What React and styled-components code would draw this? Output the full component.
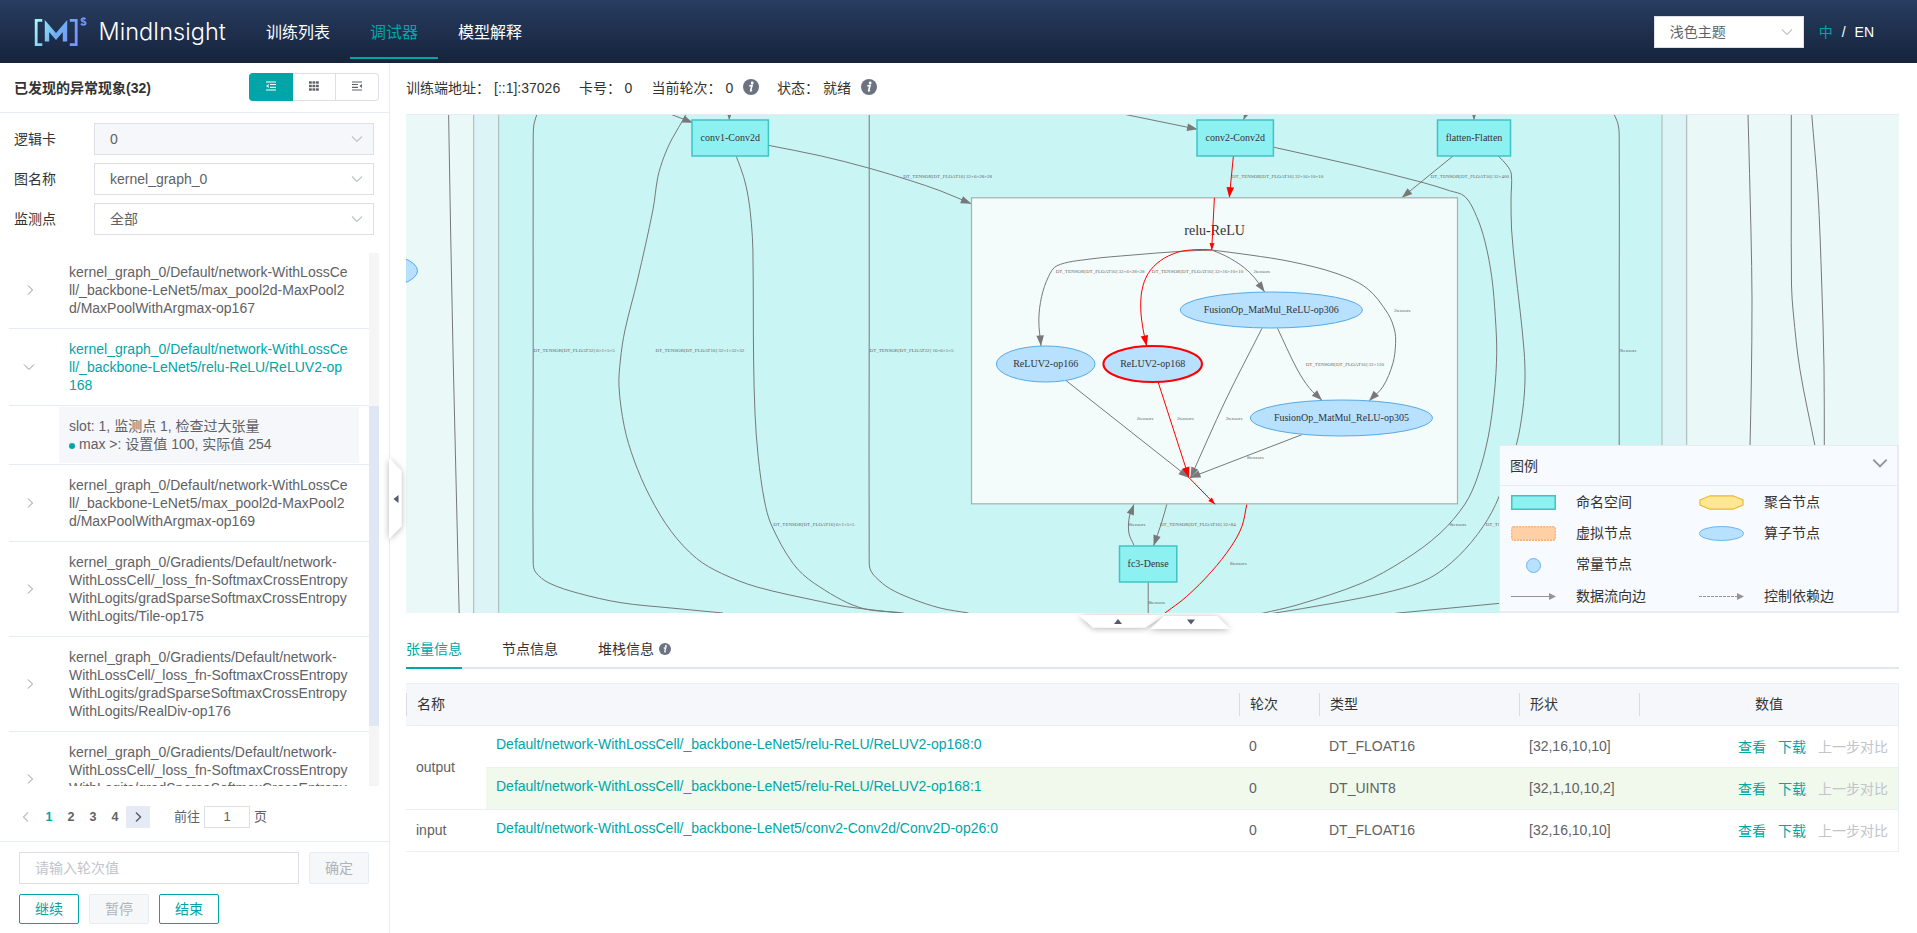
import React from "react";
import styled, { createGlobalStyle, css } from "styled-components";

const TEAL = "#00a5a7";
const SANS = `"Liberation Sans", "Noto Sans CJK SC", sans-serif`;

const GlobalStyle = createGlobalStyle`
  * { box-sizing: border-box; }
  html, body { margin: 0; padding: 0; }
  body {
    width: 1917px;
    height: 933px;
    overflow: hidden;
    background: #fff;
    color: #333;
    font: 14px/18px ${SANS};
  }
`;

/* ---------- page frame ---------- */

const Page = styled.div`
  display: flex;
  flex-direction: column;
  width: 1917px;
  height: 933px;
`;

const Header = styled.header`
  display: flex;
  align-items: center;
  flex: none;
  height: 63px;
  padding: 0 43px 0 34px;
  background: linear-gradient(180deg, #283d60, #16233b);
  color: #fff;
`;

const Brand = styled.div`
  display: flex;
  align-items: center;
  width: 212px;
  font: 300 23.5px/30px Inter, sans-serif;
`;

const BrandName = styled.span`
  margin-left: 10.5px;
  white-space: nowrap;
  letter-spacing: 0;
`;

const Nav = styled.nav`
  display: flex;
  height: 59px;
  margin-bottom: 4px;
`;

const NavItem = styled.a`
  display: flex;
  align-items: center;
  height: 59px;
  padding: 8px 20px 0;
  font-size: 16px;
  color: ${(p) => (p.$active ? TEAL : "#fff")};
  border-bottom: 2px solid ${(p) => (p.$active ? TEAL : "transparent")};
`;

const HeaderTools = styled.div`
  display: flex;
  align-items: center;
  margin-left: auto;
`;

const Lang = styled.div`
  display: flex;
  gap: 9px;
  margin-left: 15px;
  b { font-weight: 400; color: ${TEAL}; }
`;

const Body = styled.div`
  display: flex;
  flex: 1;
  min-height: 0;
`;

/* ---------- form parts ---------- */

const SelectBox = styled.div`
  display: flex;
  align-items: center;
  justify-content: space-between;
  width: ${(p) => p.$width}px;
  height: 32px;
  padding: 0 10px 0 15px;
  border: 1px solid #dcdfe6;
  background: ${(p) => (p.$disabled ? "#f5f7fa" : "#fff")};
  color: #606266;
`;

const Button = styled.button`
  width: 60px;
  height: ${(p) => p.$height || 30}px;
  padding: 0;
  border-radius: 2px;
  border: 1px solid ${TEAL};
  background: #fff;
  color: ${TEAL};
  font: 14px/18px ${SANS};
  ${(p) =>
    p.$disabled &&
    css`
      border-color: #e6ebf5;
      background: #f5f7f8;
      color: #b0b3b8;
    `}
`;

/* ---------- sidebar ---------- */

const Sidebar = styled.aside`
  position: relative;
  display: flex;
  flex-direction: column;
  flex: none;
  width: 390px;
  border-right: 1px solid #e6ebf5;
`;

const SideHead = styled.div`
  display: flex;
  align-items: center;
  justify-content: space-between;
  height: 50px;
  padding: 0 10px 0 14px;
  border-bottom: 1px solid #e6ebf5;
  font-weight: 700;
`;

const Segmented = styled.div`
  display: flex;
  height: 28px;
  margin-bottom: 1px;
`;

const Segment = styled.div`
  display: flex;
  align-items: center;
  justify-content: center;
  width: 43px;
  padding-bottom: 2px;
  border: 1px solid #dcdfe6;
  border-left-width: 0;
  color: #5f6266;
  &:last-child { border-radius: 0 4px 4px 0; }
  ${(p) =>
    p.$active &&
    css`
      width: 44px;
      border-color: ${TEAL};
      border-radius: 4px 0 0 4px;
      background: ${TEAL};
      color: #fff;
    `}
`;

const Filters = styled.div`
  display: grid;
  gap: 8px;
  padding: 10px 0 0 14px;
`;

const Filter = styled.div`
  display: flex;
  align-items: center;
  > span { width: 80px; }
`;

const ListArea = styled.div`
  display: flex;
  height: 533px;
  margin: 18px 10px 0 9px;
  overflow: hidden;
`;

const List = styled.div`
  width: 360px;
  margin-top: -1px;
`;

const ListRow = styled.div`
  display: flex;
  align-items: center;
  padding: 11px 0;
  border-bottom: 1px solid #e6ebf5;
  color: ${(p) => (p.$active ? TEAL : "#606266")};
`;

const Expander = styled.div`
  display: flex;
  flex: none;
  width: 60px;
  padding-left: ${(p) => (p.$open ? 13.5 : 15)}px;
`;

const Lines = styled.div`
  line-height: 18px;
  white-space: pre;
`;

const Detail = styled.div`
  padding: 1px 10px 1px 50px;
  border-bottom: 1px solid #e6ebf5;
`;

const DetailCard = styled.div`
  height: 56px;
  padding: 10px;
  background: #f5f7fb;
  color: #606266;
`;

const Bullet = styled.i`
  display: inline-block;
  width: 6px;
  height: 6px;
  margin-right: 4px;
  border-radius: 50%;
  background: ${TEAL};
`;

const Track = styled.div`
  width: 10px;
  padding-top: 153px;
  background: #f5f5f5;
`;

const Thumb = styled.div`
  height: 320px;
  background: #dfe6f4;
`;

const Pager = styled.div`
  display: flex;
  align-items: center;
  height: 22px;
  margin: 20px 0 13px 14px;
  color: #606266;
  font-size: 13px;
`;

const PageNo = styled.span`
  width: 22px;
  text-align: center;
  font-size: 12.5px;
  font-weight: 700;
  color: ${(p) => (p.$active ? TEAL : "#606266")};
`;

const PageArrow = styled.span`
  display: flex;
  align-items: center;
  justify-content: center;
  width: 24px;
  height: 22px;
  background: ${(p) => (p.$filled ? "#e6eaf5" : "transparent")};
`;

const JumpLabel = styled.span`
  margin-left: 24px;
`;

const PageInput = styled.span`
  width: 46px;
  height: 22px;
  margin: 0 4px;
  border: 1px solid #dcdfe6;
  text-align: center;
  line-height: 20px;
`;

const SideFoot = styled.div`
  display: grid;
  gap: 10px;
  padding: 10px 20px 0 19px;
  border-top: 1px solid #e6ebf5;
`;

const FootRow = styled.div`
  display: flex;
  gap: 10px;
`;

const StepInput = styled.div`
  width: 280px;
  height: 32px;
  padding: 0 15px;
  border: 1px solid #dcdfe6;
  line-height: 30px;
  color: #c0c4cc;
`;

const SideHandle = styled.svg`
  position: absolute;
  left: 380px;
  top: 385px;
  z-index: 2;
`;

/* ---------- main area ---------- */

const Main = styled.main`
  flex: 1;
  min-width: 0;
  padding: 0 18px 0 16px;
`;

const InfoBar = styled.div`
  display: flex;
  align-items: center;
  height: 51px;
  padding-bottom: 1px;
  white-space: pre;
`;

const Field = styled.span`
  display: flex;
  width: ${(p) => p.$width}px;
  > span:first-child { width: ${(p) => p.$label}px; }
`;

const InfoDot = styled.svg`
  flex: none;
  width: ${(p) => p.$size}px;
  height: ${(p) => p.$size}px;
  margin: ${(p) => p.$margin || 0};
`;

const GraphPanel = styled.section`
  position: relative;
  height: 499px;
  border-top: 1px solid #e6ebf5;
  > svg { display: block; }
`;

const Handles = styled.svg`
  position: absolute;
  left: 661px;
  top: 498px;
  z-index: 1;
`;

const Legend = styled.div`
  position: absolute;
  right: 0;
  bottom: 0;
  width: 400px;
  height: 168px;
  border: 1px solid #e6ebf5;
  border-right-width: 2px;
  border-bottom-width: 2px;
  background: #f7faff;
`;

const LegendHead = styled.div`
  display: flex;
  align-items: center;
  justify-content: space-between;
  height: 40px;
  padding: 1px 9.5px 0 10px;
  border-bottom: 1px solid #e6ebf5;
  color: #333;
  svg { margin-top: -6px; }
`;

const LegendGrid = styled.div`
  display: grid;
  grid-template-columns: 188px 188px;
  grid-auto-rows: 31.3px;
  padding: 1px 0 0 11px;
`;

const LegendItem = styled.div`
  display: flex;
  align-items: center;
  gap: 20px;
  &:nth-child(5) { grid-column: 1 / 3; }
  span { margin-top: -2px; }
`;

const Tabs = styled.div`
  display: flex;
  align-items: flex-start;
  gap: 40px;
  height: 56px;
  padding-top: 20px;
  border-bottom: 2px solid #e4e7f0;
`;

const Tab = styled.div`
  display: flex;
  align-items: center;
  gap: 5px;
  height: 36px;
  padding-bottom: 3px;
  border-bottom: 2px solid ${(p) => (p.$active ? TEAL : "transparent")};
  color: ${(p) => (p.$active ? TEAL : "#333")};
`;

const Table = styled.div`
  display: grid;
  grid-template-columns: 80px 753px 80px 200px 120px 259px;
  grid-template-rows: 42px 42px 42px 42px;
  margin-top: 14px;
  border: solid #ebeef5;
  border-width: 1px 1px 0 0;
`;

const HeadCell = styled.div`
  display: flex;
  align-items: center;
  grid-column: span ${(p) => p.$span || 1};
  padding-bottom: 1px;
  background: #f5f7fa;
  border-bottom: 1px solid #ebeef5;
  &::before {
    content: "";
    height: 23px;
    border-left: 1px solid #d8dce5;
    margin-right: 10px;
  }
  > span {
    flex: 1;
    padding-right: ${(p) => (p.$center ? 10 : 0)}px;
    text-align: ${(p) => (p.$center ? "center" : "left")};
  }
`;

const Cell = styled.div`
  display: flex;
  align-items: center;
  gap: 12px;
  grid-row: span ${(p) => p.$rows || 1};
  padding: 0 10px ${(p) => (p.$link ? 6 : 1)}px 10px;
  border-bottom: 1px solid #ebeef5;
  justify-content: ${(p) => (p.$end ? "flex-end" : "flex-start")};
  background: ${(p) => (p.$hl ? "#f0f9eb" : "transparent")};
  color: ${(p) => (p.$link ? TEAL : "#606266")};
`;

const Action = styled.a`
  padding-top: 1px;
  color: ${(p) => (p.$off ? "#c0c4cc" : TEAL)};
`;

/* ---------- small drawings ---------- */

const Chevron = ({ dir = "down", size = 12, width = 1.2, color = "#c0c4cc" }) => {
  const d = {
    down: "M1 3.5 6 8.5 11 3.5",
    right: "M4 1.5 8.5 6 4 10.5",
    left: "M8 1.5 3.5 6 8 10.5",
  }[dir];
  return (
    <svg width={size} height={size} viewBox="0 0 12 12">
      <path d={d} fill="none" stroke={color} strokeWidth={width} />
    </svg>
  );
};

const Info = ({ size, margin }) => (
  <InfoDot $size={size} $margin={margin} viewBox="0 0 16 16">
    <circle cx="8" cy="8" r="8" fill="#6c7280" />
    <circle cx="9.2" cy="4" r="1.4" fill="#fff" />
    <path d="M6.3 6.9 9 6.5 7.7 11.4C7.6 12 8 12 8.900 11.200" fill="none" stroke="#fff" strokeWidth="1.7" />
  </InfoDot>
);

const Logo = () => (
  <svg width="54" height="32" viewBox="34 15 54 32">
    <defs>
      <linearGradient id="lg" gradientUnits="userSpaceOnUse" x1="35" x2="77" y1="22" y2="40">
        <stop offset="0" stopColor="#a6f7f8" />
        <stop offset="0.5" stopColor="#6fb0f2" />
        <stop offset="1" stopColor="#7c92fd" />
      </linearGradient>
    </defs>
    <g fill="none" stroke="url(#lg)">
      <path d="M42.300 19.300H36.200V43.600H42.300" strokeWidth="2.8" />
      <path d="M69.800 19.300H76.200V43.600H69.800" strokeWidth="2.800" />
      <path d="M47 40.500V25L56 35.500 65 25V40.500" strokeWidth="4.400" />
    </g>
    <path d="M85.400 18.300C84 16.900 81.500 17.100 81.500 18.900 81.500 21 85.600 20 85.600 22.200 85.600 24.100 82.600 24.300 81 22.700" fill="none" stroke="#7391f8" strokeWidth="2" />
  </svg>
);

const IndentIcon = ({ flip }) => (
  <svg width="10" height="10" viewBox="0 0 10 10" fill="currentColor">
    <path d="M0 .4H10V1.6H0zM0 8.4H10V9.6H0z" />
    {flip ? (
      <path d="M0 3H6V4.1H0zM0 5.8H6V6.9H0zM10 3V7L7.4 5z" />
    ) : (
      <path d="M4 3H10V4.1H4zM4 5.8H10V6.9H4zM0 5 2.6 3V7z" />
    )}
  </svg>
);

const GridIcon = () => (
  <svg width="10" height="10" viewBox="0 0 10 10" fill="currentColor">
    {[0, 3.5, 7].map((y) =>
      [0, 3.5, 7].map((x) => <rect key={`${x}-${y}`} x={x} y={y + 0.3} width="2.8" height="2.4" />)
    )}
  </svg>
);

/* ---------- graph ---------- */

const GRAY = "#787878";
const RED = "#ff0000";

const unit = (a, b) => {
  const dx = b[0] - a[0];
  const dy = b[1] - a[1];
  const l = Math.hypot(dx, dy) || 1;
  return [dx / l, dy / l];
};

// Smooth curve through a list of points; handles are a third of each segment.
const spline = (pts) => {
  let d = `M${pts[0].join(" ")}`;
  for (let i = 0; i < pts.length - 1; i++) {
    const b = pts[i];
    const c = pts[i + 1];
    const h = Math.hypot(c[0] - b[0], c[1] - b[1]) / 3;
    const s = unit(pts[i - 1] || b, c);
    const e = unit(b, pts[i + 2] || c);
    d += `C${b[0] + s[0] * h} ${b[1] + s[1] * h} ${c[0] - e[0] * h} ${c[1] - e[1] * h} ${c[0]} ${c[1]}`;
  }
  return d;
};

const Edge = ({ pts, red, head = 0 }) => {
  const color = red ? RED : GRAY;
  const [x, y] = pts[pts.length - 1];
  const [px, py] = pts[pts.length - 2];
  const angle = (Math.atan2(y - py, x - px) * 180) / Math.PI;
  const w = head * 0.36;
  return (
    <g>
      <path d={spline(pts)} fill="none" stroke={color} strokeWidth="1" />
      {head > 0 && (
        <path d={`M0 0L${-head} ${-w}V${w}Z`} fill={color} transform={`translate(${x} ${y}) rotate(${angle})`} />
      )}
    </g>
  );
};

const EDGES = [
  { pts: [[448.6, 114], [450.6, 230], [453.2, 360], [459.2, 614]] },
  { pts: [[537, 114], [534, 124], [533.2, 136], [533.2, 350], [533.2, 562], [535.5, 572], [549, 583], [578.6, 593.3], [621, 602.7], [671, 608], [723, 613]] },
  { pts: [[686, 115], [671.4, 140], [664, 156.7], [657.9, 176.7], [652.9, 210], [637.5, 280], [625, 330], [620.4, 360], [619, 386.7], [624.3, 426.7], [634, 460], [650, 496.7], [671.4, 531.7], [696.4, 558.3], [721.4, 573.3], [757, 587], [821.4, 601.7], [846.4, 606.7], [900, 613]] },
  { pts: [[670, 114], [692.9, 122.7]], head: 10.5 },
  { pts: [[729.3, 105], [729.3, 120]], head: 10.5 },
  { pts: [[736.4, 156.7], [743.6, 176.7], [748.2, 196.7], [751.4, 223.3], [752.9, 250], [753.3, 310], [753.6, 360], [755, 413.3], [758.2, 456.7], [764.3, 500], [771.4, 525], [792.9, 563.3], [814.3, 583.3], [858.9, 607.3], [903.6, 613]] },
  { pts: [[869.2, 114], [869.2, 340], [869.2, 562], [870.5, 570], [876, 577.5], [889.3, 588.3], [910.7, 598.3], [940, 608], [968.6, 613]] },
  { pts: [[768.2, 145.3], [821.4, 156], [869.6, 168.3], [910.7, 180.7], [940, 190.7], [971.3, 203.7]], head: 10.5 },
  { pts: [[1123, 114], [1197.6, 129.3]], head: 10.5 },
  { pts: [[1250, 105], [1243.4, 120]], head: 10.5 },
  { pts: [[1474, 105], [1474, 120]], head: 10.5 },
  { pts: [[1453, 156], [1401.8, 197.7]], head: 10.5 },
  { pts: [[1498.3, 156], [1506.7, 165], [1511.3, 174], [1511, 200], [1511.6, 230], [1515, 266.7], [1520, 310], [1524, 350], [1525, 380], [1522.7, 410], [1516.3, 445], [1499, 496.7], [1483, 526.7], [1457.9, 556.7], [1429.3, 578.3], [1393.6, 590.7], [1332.9, 603.3], [1272, 613.5]] },
  { pts: [[1274, 147.3], [1353, 165], [1422, 182.3], [1449.6, 190.7], [1465, 196.6], [1476.7, 216.7], [1485, 241.7], [1491.7, 276.7], [1495.3, 316.7], [1496.7, 353.3], [1494.3, 393.3], [1488.2, 437], [1477.5, 477], [1465, 504], [1440, 533.3], [1404.3, 560], [1361.4, 583.3], [1297, 605], [1261.4, 613.5]] },
  { pts: [[1614, 114], [1618, 124], [1619.2, 136], [1619.2, 300], [1619.2, 450]] },
  { pts: [[1395.4, 613.3], [1500, 603.3]] },
  { pts: [[1748, 114], [1751, 233], [1752, 300], [1751.3, 383], [1750, 446]] },
  { pts: [[1791.3, 114], [1791.3, 200], [1791.5, 285], [1793.3, 313], [1800, 370], [1815, 446]] },
  { pts: [[1811.7, 114], [1818, 193], [1821.7, 283], [1824, 367], [1824.3, 446]] },
  { pts: [[1134, 545.3], [1128.9, 533], [1129.3, 517], [1134, 504.3]], head: 10.5 },
  { pts: [[1166.8, 504.3], [1161.4, 523.3], [1153.6, 545.7]], head: 10.5 },
  { pts: [[1148.2, 582.3], [1148.2, 613]] },
  { pts: [[1246.8, 504.3], [1241.8, 526.7], [1231, 546.7], [1211.4, 571.7], [1186.4, 596.7], [1164.3, 613.5]], red: true },
  { pts: [[1233.4, 156], [1229.3, 197.7]], red: true, head: 10.5 },
];

const INNER_EDGES = [
  { pts: [[1211.7, 250], [1181, 251.3], [1132.8, 255], [1088, 259.3], [1057, 265.7], [1048.5, 276.7], [1041.6, 296.7], [1038.8, 320], [1041, 346]], head: 10.5 },
  { pts: [[1211.7, 250], [1225.8, 256], [1243, 266.7], [1255, 278.3], [1264.7, 292]], head: 10.5 },
  { pts: [[1211.7, 250], [1250, 255], [1291.2, 261.7], [1336, 273.3], [1367, 288.3], [1387.7, 313.3], [1394.5, 330], [1395.6, 343.3], [1392.9, 363.3], [1382.9, 386.7], [1369, 401]], head: 10.5 },
  { pts: [[1277.5, 328.3], [1297, 369], [1309.6, 388.3], [1322, 400.3]], head: 10.5 },
  { pts: [[1262, 328.3], [1225.7, 400], [1190.5, 477.7]], head: 10.5 },
  { pts: [[1065.7, 380.3], [1189, 477.7]], head: 10.5 },
  { pts: [[1301.8, 434.7], [1190, 477.7]], head: 10.5 },
  { pts: [[1158.2, 382.3], [1189, 477.7]], red: true, head: 10.5 },
  { pts: [[1189, 477.7], [1215, 504.3]], red: true, head: 7 },
  { pts: [[1211.7, 250], [1194.8, 249.7], [1177.6, 252.3], [1160.4, 260.7], [1148.3, 273.3], [1142, 290], [1140.8, 310], [1143.2, 330], [1146.6, 346]], red: true, head: 10.5 },
  { pts: [[1214.4, 197.7], [1211.7, 250]], red: true, head: 7 },
];

const F16 = "DT_TENSOR[DT_FLOAT16] ";
const F32 = "DT_TENSOR[DT_FLOAT32] ";
const LABELS = [
  [533.4, 352, F32 + "6×1×5×5"],
  [655.4, 352, F16 + "32×1×32×32"],
  [869.6, 352, F32 + "16×6×5×5"],
  [903.2, 178, F16 + "32×6×28×28"],
  [773.2, 526, F16 + "6×1×5×5"],
  [1232, 178, F16 + "32×16×10×10"],
  [1430.7, 178, F16 + "32×400"],
  [1055.7, 273, F16 + "32×6×28×28"],
  [1151.8, 273, F16 + "32×16×10×10"],
  [1253.4, 273, "2tensors"],
  [1393.9, 312, "2tensors"],
  [1305.7, 366, F16 + "32×120"],
  [1136.8, 420, "2tensors"],
  [1177, 420, "2tensors"],
  [1225.7, 420, "2tensors"],
  [1247, 459, "8tensors"],
  [1128.8, 526, "8tensors"],
  [1160, 526, F16 + "32×84"],
  [1230, 565, "8tensors"],
  [1148.4, 604, "8tensors"],
  [1449.6, 526, "8tensors"],
  [1485.7, 526, F16 + "32×400"],
  [1619.6, 352, "9tensors"],
];

const NodeText = styled.text`
  font: ${(p) => p.$size || 10}px "Liberation Serif", serif;
  text-anchor: middle;
  fill: #333;
`;

const EdgeText = styled.text`
  font: 5px "Liberation Serif", serif;
  fill: #666;
  white-space: pre;
`;

const Scope = ({ x, y, w, h, name }) => (
  <g>
    <rect x={x} y={y} width={w} height={h} fill="#8df1f2" stroke="#3fc3c5" strokeWidth="1.5" />
    <NodeText x={x + w / 2} y={y + h / 2 + 3}>{name}</NodeText>
  </g>
);

const Operator = ({ x, y, rx, name, selected }) => (
  <g>
    <ellipse cx={x} cy={y} rx={rx} ry="18" fill="#b8e0ff" stroke={selected ? RED : "#56abe8"} strokeWidth={selected ? 2 : 1} />
    <NodeText x={x} y={y + 3}>{name}</NodeText>
  </g>
);

const Graph = () => (
  <svg width="1493" height="498" viewBox="406 115 1493 498">
    <rect x="406" y="114" width="1493" height="500" fill="#ebf8f8" />
    <rect x="473.7" y="100" width="1213" height="530" fill="#dcf4f5" stroke="#a9b5b5" />
    <rect x="498.7" y="100" width="1163.3" height="530" fill="#c9f5f4" stroke="#a9b5b5" />
    <ellipse cx="369.5" cy="270.8" rx="48" ry="18" fill="#b8e0ff" stroke="#56abe8" />
    {EDGES.map((e, i) => <Edge key={i} {...e} />)}
    <rect x="971.5" y="197.8" width="486" height="306" fill="#f4fbfb" stroke="#a9afaf" strokeWidth="1.2" />
    <NodeText x="1214.6" y="235" $size={14}>relu-ReLU</NodeText>
    {INNER_EDGES.map((e, i) => <Edge key={i} {...e} />)}
    {LABELS.map(([x, y, t], i) => <EdgeText key={i} x={x} y={y}>{t}</EdgeText>)}
    <Scope x={692} y={120} w={76.4} h={36} name="conv1-Conv2d" />
    <Scope x={1197} y={120} w={76.4} h={36} name="conv2-Conv2d" />
    <Scope x={1437.5} y={120} w={73} h={36} name="flatten-Flatten" />
    <Scope x={1119.5} y={546} w={57.3} h={36} name="fc3-Dense" />
    <Operator x={1271.3} y={310} rx={91} name="FusionOp_MatMul_ReLU-op306" />
    <Operator x={1045.7} y={364} rx={49.3} name="ReLUV2-op166" />
    <Operator x={1152.7} y={364} rx={49.3} name="ReLUV2-op168" selected />
    <Operator x={1341.4} y={418} rx={91} name="FusionOp_MatMul_ReLU-op305" />
  </svg>
);

/* ---------- legend ---------- */

const SWATCHES = {
  scope: <rect x=".75" y=".75" width="43.5" height="13.5" fill="#8df1f2" stroke="#3fc3c5" strokeWidth="1.5" />,
  group: <path d="M1 5 11 .8H34L44 5V10L34 14.2H11L1 10Z" fill="#ffe794" stroke="#ecb92f" strokeWidth="1.2" />,
  virtual: <rect x=".75" y=".75" width="43.5" height="13.5" rx="1.5" fill="#ffd0a6" stroke="#f59a4c" strokeDasharray="2 1" />,
  operator: <ellipse cx="22.5" cy="7.5" rx="22" ry="7" fill="#b8e0ff" stroke="#6cb6ed" />,
  constant: <circle cx="22.5" cy="7.5" r="7" fill="#b8e0ff" stroke="#6cb6ed" />,
  data: <><path d="M0 7.5H40" stroke="#949494" /><path d="M38 4 45 7.5 38 11Z" fill="#949494" /></>,
  control: <><path d="M0 7.5H40" stroke="#949494" strokeDasharray="3 1" /><path d="M38 4 45 7.5 38 11Z" fill="#949494" /></>,
};

const LEGEND = [
  ["scope", "命名空间"],
  ["group", "聚合节点"],
  ["virtual", "虚拟节点"],
  ["operator", "算子节点"],
  ["constant", "常量节点"],
  ["data", "数据流向边"],
  ["control", "控制依赖边"],
];

/* ---------- data ---------- */

const GRAD = "kernel_graph_0/Gradients/Default/network-\nWithLossCell/_loss_fn-SoftmaxCrossEntropy\nWithLogits/gradSparseSoftmaxCrossEntropy\n";
const BACKBONE = "kernel_graph_0/Default/network-WithLossCe\nll/_backbone-LeNet5/";
const HITS = [
  { text: BACKBONE + "max_pool2d-MaxPool2\nd/MaxPoolWithArgmax-op167" },
  { text: BACKBONE + "relu-ReLU/ReLUV2-op\n168", open: true },
  { text: BACKBONE + "max_pool2d-MaxPool2\nd/MaxPoolWithArgmax-op169" },
  { text: GRAD + "WithLogits/Tile-op175" },
  { text: GRAD + "WithLogits/RealDiv-op176" },
  { text: GRAD + " " },
];

const TENSORS = [
  { kind: "output", rows: 2, name: "Default/network-WithLossCell/_backbone-LeNet5/relu-ReLU/ReLUV2-op168:0", type: "DT_FLOAT16", shape: "[32,16,10,10]" },
  { name: "Default/network-WithLossCell/_backbone-LeNet5/relu-ReLU/ReLUV2-op168:1", type: "DT_UINT8", shape: "[32,1,10,10,2]", hl: true },
  { kind: "input", rows: 1, name: "Default/network-WithLossCell/_backbone-LeNet5/conv2-Conv2d/Conv2D-op26:0", type: "DT_FLOAT16", shape: "[32,16,10,10]" },
];

const Select = ({ value, width = 280, disabled }) => (
  <SelectBox $width={width} $disabled={disabled}>
    {value}
    <Chevron />
  </SelectBox>
);

export default function App() {
  return (
    <Page>
      <GlobalStyle />
      <Header>
        <Brand>
          <Logo />
          <BrandName>MindInsight</BrandName>
        </Brand>
        <Nav>
          <NavItem>训练列表</NavItem>
          <NavItem $active>调试器</NavItem>
          <NavItem>模型解释</NavItem>
        </Nav>
        <HeaderTools>
          <Select value="浅色主题" width={150} />
          <Lang><b>中</b><span>/</span><span>EN</span></Lang>
        </HeaderTools>
      </Header>

      <Body>
        <Sidebar>
          <SideHead>
            已发现的异常现象(32)
            <Segmented>
              <Segment $active><IndentIcon /></Segment>
              <Segment><GridIcon /></Segment>
              <Segment><IndentIcon flip /></Segment>
            </Segmented>
          </SideHead>
          <Filters>
            <Filter><span>逻辑卡</span><Select value="0" disabled /></Filter>
            <Filter><span>图名称</span><Select value="kernel_graph_0" /></Filter>
            <Filter><span>监测点</span><Select value="全部" /></Filter>
          </Filters>
          <ListArea>
            <List>
              {HITS.map((h, i) => (
                <React.Fragment key={i}>
                  <ListRow $active={h.open}>
                    <Expander $open={h.open}>
                      <Chevron dir={h.open ? "down" : "right"} color="#8f9399" width={1} />
                    </Expander>
                    <Lines>{h.text}</Lines>
                  </ListRow>
                  {h.open && (
                    <Detail>
                      <DetailCard>
                        <div>slot: 1, 监测点 1, 检查过大张量</div>
                        <div><Bullet />max &gt;: 设置值 100, 实际值 254</div>
                      </DetailCard>
                    </Detail>
                  )}
                </React.Fragment>
              ))}
            </List>
            <Track><Thumb /></Track>
          </ListArea>
          <Pager>
            <PageArrow><Chevron dir="left" width={1.4} /></PageArrow>
            <PageNo $active>1</PageNo>
            <PageNo>2</PageNo>
            <PageNo>3</PageNo>
            <PageNo>4</PageNo>
            <PageArrow $filled><Chevron dir="right" width={1.5} color="#606266" /></PageArrow>
            <JumpLabel>前往</JumpLabel>
            <PageInput>1</PageInput>
            <span>页</span>
          </Pager>
          <SideFoot>
            <FootRow>
              <StepInput>请输入轮次值</StepInput>
              <Button $height={32} $disabled>确定</Button>
            </FootRow>
            <FootRow>
              <Button>继续</Button>
              <Button $disabled>暂停</Button>
              <Button>结束</Button>
            </FootRow>
          </SideFoot>
          <SideHandle width="36" height="102" viewBox="-10 -10 36 102">
            <defs>
              <filter id="soft" x="-50%" y="-50%" width="200%" height="200%">
                <feDropShadow dx="0" dy="1" stdDeviation="3" floodColor="#000" floodOpacity="0.3" />
              </filter>
            </defs>
            <path d="M-1 0 11.500 13V68L-1 81Z" fill="#fff" filter="url(#soft)" />
            <path d="M8.500 37V45L3.500 41Z" fill="#555b6e" />
          </SideHandle>
        </Sidebar>

        <Main>
          <InfoBar>
            <Field $width={173} $label={88}><span>训练端地址：</span><span>[::1]:37026</span></Field>
            <Field $width={72.5} $label={45.500}><span>卡号：</span><span>0</span></Field>
            <Field $width={91.500} $label={74}><span>当前轮次：</span><span>0</span></Field>
            <Info size={16} margin="0 18px 3px 0" />
            <Field $width={84} $label={46}><span>状态：</span><span>就绪</span></Field>
            <Info size={16} margin="0 0 3px 0" />
          </InfoBar>
          <GraphPanel>
            <Graph />
            <Legend>
              <LegendHead>图例<Chevron size={16} color="#909399" width={1.4} /></LegendHead>
              <LegendGrid>
                {LEGEND.map(([kind, label]) => (
                  <LegendItem key={kind}>
                    <svg width="45" height="15">{SWATCHES[kind]}</svg>
                    <span>{label}</span>
                  </LegendItem>
                ))}
              </LegendGrid>
            </Legend>
            <Handles width="180" height="32" viewBox="0 0 180 32">
              <path d="M12 2H98L78 14.500H26Z" fill="#fff" filter="url(#soft)" />
              <path d="M97 3H150L163 16H83Z" fill="#fff" filter="url(#soft)" />
              <path d="M47 11H55L51 6Z" fill="#555b6e" />
              <path d="M120 6.500H128L124 11.500Z" fill="#555b6e" />
            </Handles>
          </GraphPanel>
          <Tabs>
            <Tab $active>张量信息</Tab>
            <Tab>节点信息</Tab>
            <Tab>堆栈信息<Info size={12} /></Tab>
          </Tabs>
          <Table>
            <HeadCell $span={2}><span>名称</span></HeadCell>
            <HeadCell><span>轮次</span></HeadCell>
            <HeadCell><span>类型</span></HeadCell>
            <HeadCell><span>形状</span></HeadCell>
            <HeadCell $center><span>数值</span></HeadCell>
            {TENSORS.map((t) => (
              <React.Fragment key={t.name}>
                {t.kind && <Cell $rows={t.rows}>{t.kind}</Cell>}
                <Cell $link $hl={t.hl}>{t.name}</Cell>
                <Cell $hl={t.hl}>0</Cell>
                <Cell $hl={t.hl}>{t.type}</Cell>
                <Cell $hl={t.hl}>{t.shape}</Cell>
                <Cell $hl={t.hl} $end>
                  <Action>查看</Action>
                  <Action>下载</Action>
                  <Action $off>上一步对比</Action>
                </Cell>
              </React.Fragment>
            ))}
          </Table>
        </Main>
      </Body>
    </Page>
  );
}
